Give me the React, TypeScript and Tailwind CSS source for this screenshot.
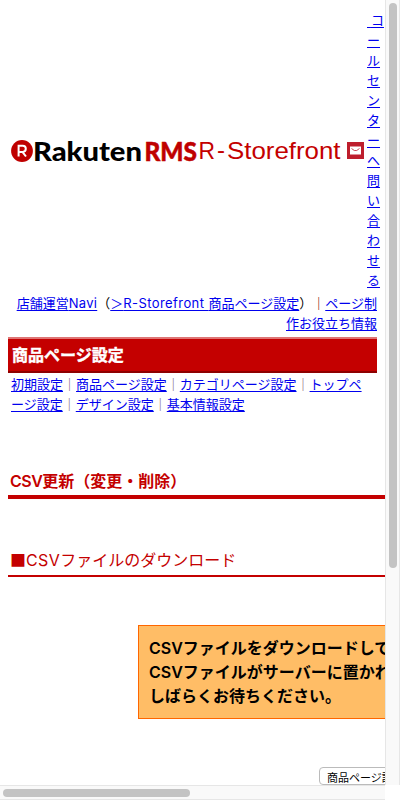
import type { ReactNode } from 'react';

function Link({ children, className = '' }: { children: ReactNode; className?: string }) {
  return (
    <a className={`text-[#0000ee] underline decoration-1 underline-offset-2 ${className}`}>{children}</a>
  );
}

function Logo() {
  return (
    <svg width="356" height="40" viewBox="0 -3 356 40" className="block shrink-0">
      <circle cx="14" cy="17" r="10.9" fill="#bf0000" />
      <path d="M10.6 22.5V11.7h4.1a3.1 3.1 0 0 1 0 6.2h-3.4m3.1 0 3.6 4.6" fill="none" stroke="#fff" strokeWidth="2" />
      <g fontFamily="Lato, 'Liberation Sans', sans-serif" fontWeight="900">
        <text x="25" y="26.8" fontSize="27" textLength="109" lengthAdjust="spacingAndGlyphs">Rakuten</text>
        <text x="136.5" y="26.8" fontSize="26.5" fill="#bf0000" stroke="#bf0000" strokeWidth="0.5" textLength="52.5" lengthAdjust="spacingAndGlyphs">RMS</text>
      </g>
      <g fontFamily="'Liberation Sans', sans-serif" fontSize="24" fill="#c40000">
        <text x="190.5" y="25" textLength="16.5" lengthAdjust="spacingAndGlyphs">R</text>
        <text x="209" y="24" textLength="8" lengthAdjust="spacingAndGlyphs">-</text>
        <text x="219" y="25" textLength="113.5" lengthAdjust="spacingAndGlyphs">Storefront</text>
      </g>
      <rect x="339" y="8" width="17" height="17" fill="#be1e2d" />
      <rect x="342" y="12.5" width="11" height="8" fill="#fff" />
      <path d="m343.5 14.5 2.8 2h2.4l2.8-2" fill="none" stroke="#be1e2d" strokeWidth="0.8" />
    </svg>
  );
}

const callCenter = ['コ', 'ー', 'ル', 'セ', 'ン', 'タ', 'ー', 'へ', '問', 'い', '合', 'わ', 'せ', 'る'];

export default function App() {
  return (
    <div className="flex h-[800px] w-[400px] flex-col overflow-hidden bg-white font-['Noto_Sans_CJK_JP','Liberation_Sans',sans-serif] text-[13px] leading-5 text-black">
      <div className="flex h-[785px]">
        <main className="h-[785px] w-[385px] overflow-hidden">
          <header className="flex h-[292px] items-center pt-[9px] pl-2">
            <Logo />
            <div className="ml-[3px] flex flex-col self-start pt-px">
              {callCenter.map((c, i) => (
                <Link key={i} className="h-5 whitespace-pre">{i === 0 ? <><span className="tracking-[1px]"> </span>{c}</> : c}</Link>
              ))}
            </div>
          </header>

          <div className="h-[45px] w-[377px] pt-px text-right whitespace-nowrap">
            <div>
              <Link>店舗運営<span className="font-['Inter'] tracking-[0.3px]">Navi</span></Link>（<Link>＞<span className="font-['Inter'] tracking-[0.42px]">R-Storefront </span>商品ページ設定</Link>）<span className="font-bold text-[#881100]">｜</span><Link>ページ制</Link>
            </div>
            <div><Link>作お役立ち情報</Link></div>
          </div>

          <h1 className="ml-2 flex h-9 w-[369px] items-center border-t-2 border-b-2 border-t-[#df7575] border-b-[#8e0000] bg-[#c40000] pb-0.5 pl-1 text-base font-bold text-white [-webkit-text-stroke:0.4px_white]">商品ページ設定</h1>

          <nav className="mt-px pl-[11px] whitespace-nowrap text-[#775577]">
            <div><Link>初期設定</Link>｜<Link>商品ページ設定</Link>｜<Link>カテゴリページ設定</Link>｜<Link>トップペ</Link></div>
            <div><Link>ージ設定</Link>｜<Link>デザイン設定</Link>｜<Link>基本情報設定</Link></div>
          </nav>

          <h2 className="mt-[53px] ml-2 h-8 border-b-4 border-[#c40000] pl-0.5 text-base leading-[26px] font-bold whitespace-nowrap text-[#c40000]"><span className="font-['Inter'] font-semibold tracking-[-0.5px]">CSV</span>更新（変更・削除）</h2>
          <h3 className="mt-[48px] ml-2 h-[30px] border-b-2 border-[#c40000] pl-[2px] text-base leading-6 whitespace-nowrap text-[#c40000]">■<span className="font-['Inter'] tracking-[0.4px]">CSV</span>ファイルのダウンロード</h3>

          <section className="mt-12 ml-[138px] h-[94px] w-[520px] border border-[#ff6600] bg-[#ffbd66] pt-[9px] pl-[10px] text-base leading-6 font-bold whitespace-nowrap">
            <p className="h-6"><span className="font-['Inter'] font-semibold">CSV</span>ファイルをダウンロードしています。</p>
            <p className="h-6"><span className="font-['Inter'] font-semibold">CSV</span>ファイルがサーバーに置かれるまで、</p>
            <p className="h-6">しばらくお待ちください。</p>
          </section>

          <button className="mt-12 ml-[319px] h-[18px] w-[130px] rounded-[4px] border border-[#bbb] bg-white pl-[7px] text-left text-[11px] leading-[18px] whitespace-nowrap">商品ページ設定</button>
        </main>
        <div className="h-[785px] w-[15px] border-x border-[#e6e6e6] bg-[#f9f9f9] pt-[3px] pl-[3px]">
          <div className="h-[565px] w-2 rounded-full bg-[#c3c3c3]" />
        </div>
      </div>
      <div className="h-[15px] w-[385px] border-y border-[#e6e6e6] bg-[#f9f9f9] pt-[3px] pl-[3px]">
        <div className="h-2 w-[187px] rounded-full bg-[#c3c3c3]" />
      </div>
    </div>
  );
}
